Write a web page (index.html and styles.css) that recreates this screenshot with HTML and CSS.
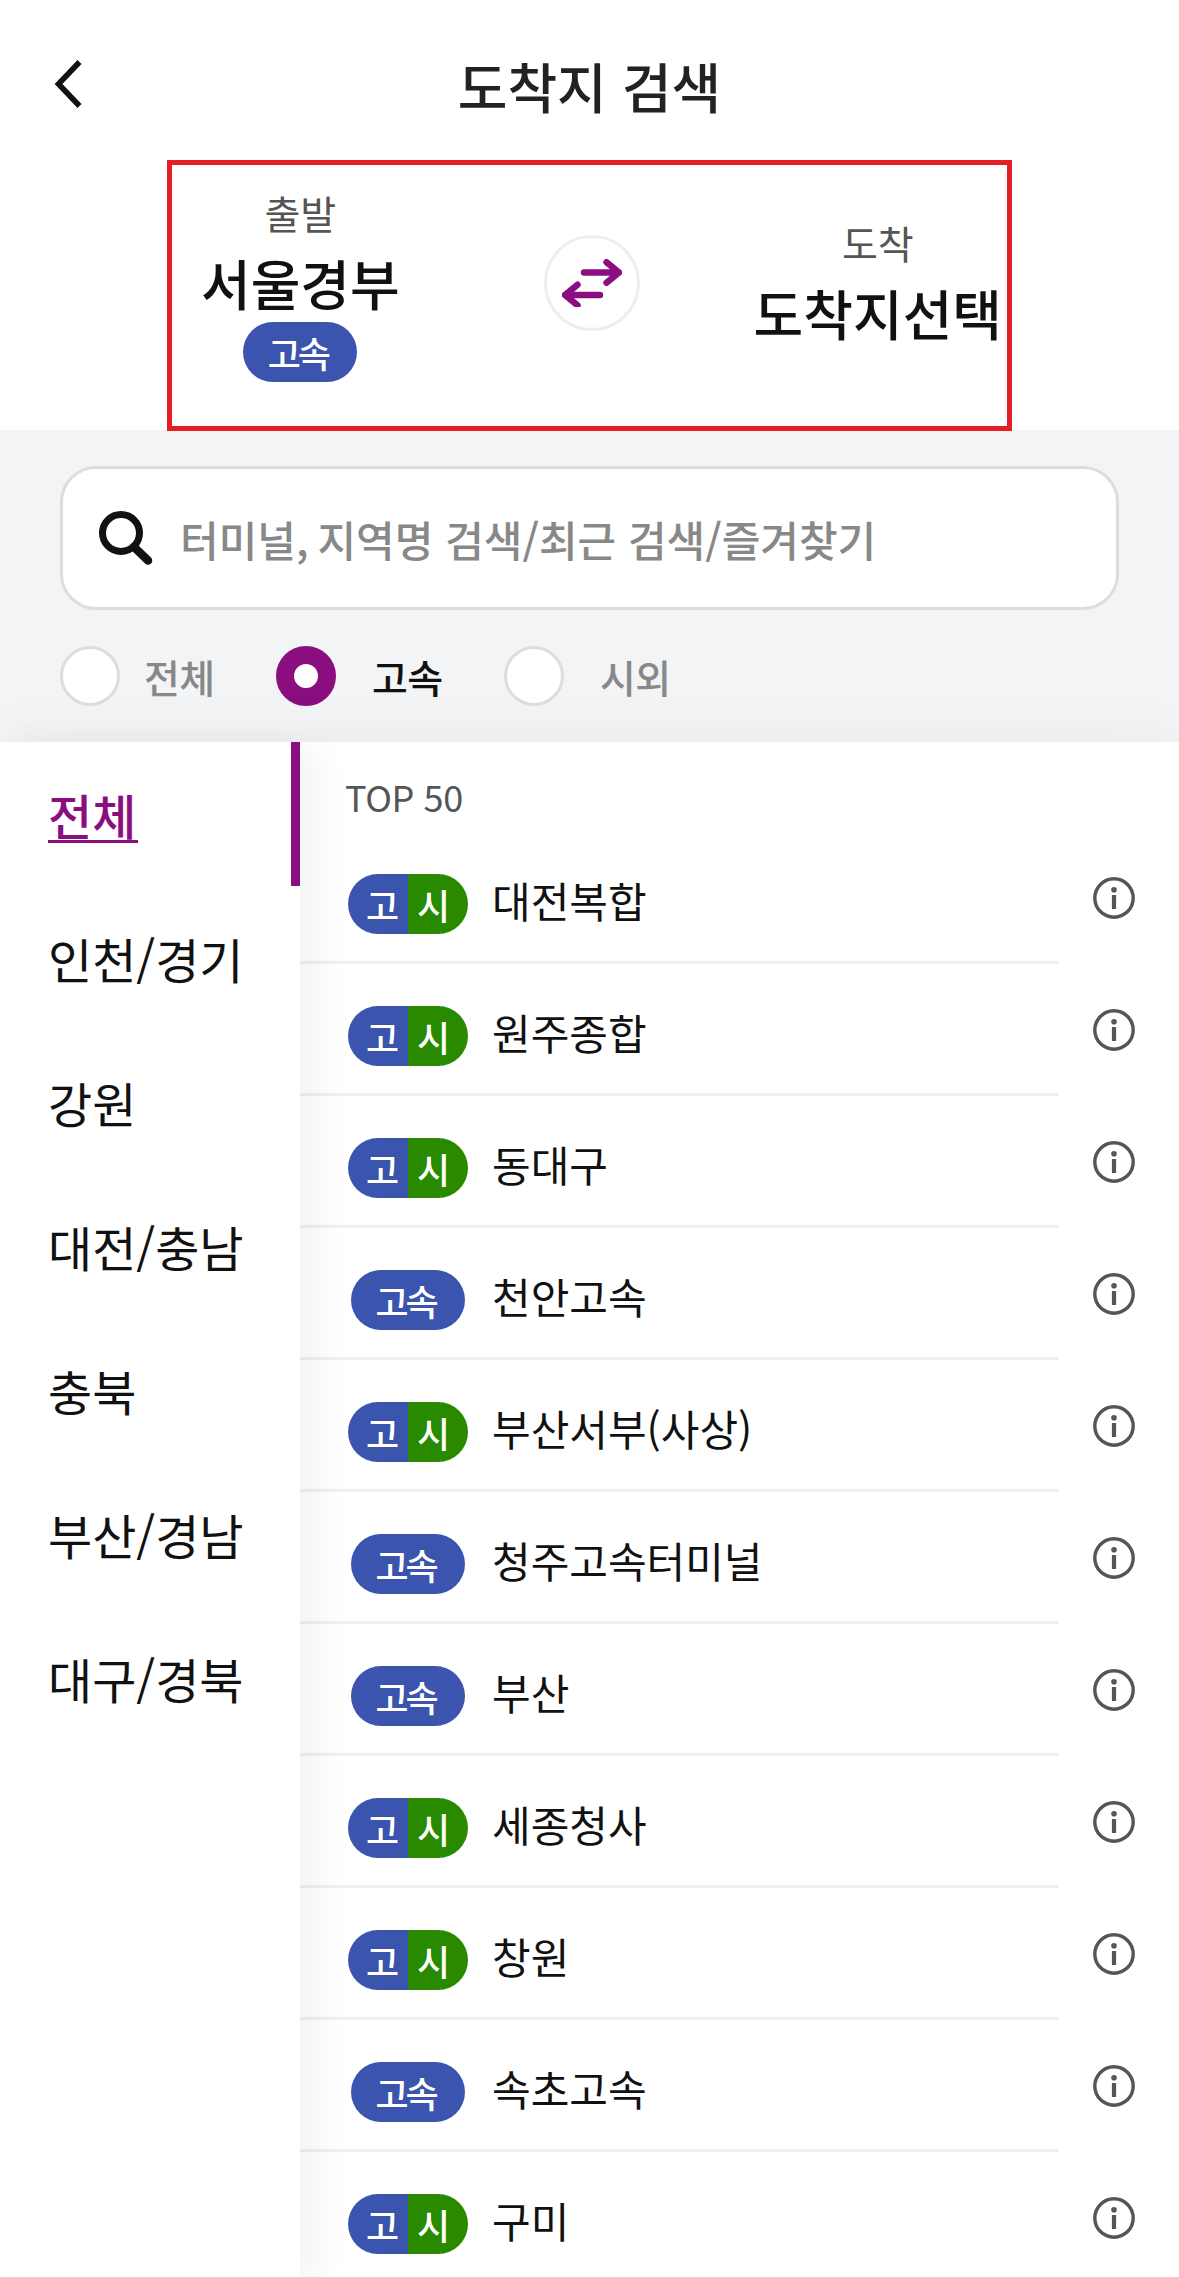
FILE: index.html
```html
<!DOCTYPE html>
<html lang="ko">
<head>
<meta charset="utf-8">
<title>도착지 검색</title>
<link rel="stylesheet" href="styles.css">
</head>
<body>
<svg class="defs" width="0" height="0" aria-hidden="true">
  <symbol id="info" viewBox="0 0 42 42">
    <circle cx="21" cy="21" r="19.2" fill="none" stroke="#555" stroke-width="3.4"/>
    <circle cx="21" cy="12.7" r="2.8" fill="#555"/>
    <path d="M21 18v14" stroke="#555" stroke-width="4.2"/>
  </symbol>
</svg>
<header class="header">
  <button class="back" aria-label="뒤로">
    <svg width="30" height="50" viewBox="0 0 30 50"><path d="M25.5 3 4.5 25l21 22" fill="none" stroke="#111" stroke-width="5.6"/></svg>
  </button>
  <h1 class="title">도착지 검색</h1>
</header>

<section class="route">
  <div class="stop">
    <span class="stop-label">출발</span>
    <strong class="stop-name">서울경부</strong>
    <span class="badge">고속</span>
  </div>
  <button class="swap" aria-label="교체">
    <svg width="60" height="48" viewBox="0 0 60 48"><g fill="none" stroke="#8b0e80" stroke-width="6.4" stroke-linecap="round" stroke-linejoin="round"><path d="M22 13.5h35M44.500 3.200 57 13.500 44.500 23.800"/><path d="M38 36H3M15.500 25.700 3 36l12.500 10.300"/></g></svg>
  </button>
  <div class="stop">
    <span class="stop-label">도착</span>
    <strong class="stop-name">도착지선택</strong>
  </div>
</section>

<section class="filter">
  <div class="search">
    <svg width="58" height="58" viewBox="0 0 58 58"><g fill="none" stroke="#111"><circle cx="24" cy="24" r="18.500" stroke-width="7"/><path d="M37 38 51 51.500" stroke-width="8.500" stroke-linecap="round"/></g></svg>
    <span class="placeholder">터미널<span class="comma">, </span>지역명 검색/최근 검색/즐겨찾기</span>
  </div>
  <div class="radios">
    <label class="radio"><i class="dot"></i><span>전체</span></label>
    <label class="radio on"><i class="dot"></i><span>고속</span></label>
    <label class="radio last"><i class="dot"></i><span>시외</span></label>
  </div>
</section>

<main class="panel">
  <nav class="regions">
    <a class="region active"><span>전체</span></a>
    <a class="region">인천/경기</a>
    <a class="region">강원</a>
    <a class="region">대전/충남</a>
    <a class="region">충북</a>
    <a class="region">부산/경남</a>
    <a class="region">대구/경북</a>
  </nav>
  <div class="list">
    <h2 class="list-title">TOP 50</h2>
    <div class="row"><div class="terminal"><span class="kind"><span class="duo"><b>고</b><b>시</b></span></span><span>대전복합</span></div><svg class="info"><use href="#info"/></svg></div>
    <div class="row"><div class="terminal"><span class="kind"><span class="duo"><b>고</b><b>시</b></span></span><span>원주종합</span></div><svg class="info"><use href="#info"/></svg></div>
    <div class="row"><div class="terminal"><span class="kind"><span class="duo"><b>고</b><b>시</b></span></span><span>동대구</span></div><svg class="info"><use href="#info"/></svg></div>
    <div class="row"><div class="terminal"><span class="kind"><span class="badge">고속</span></span><span>천안고속</span></div><svg class="info"><use href="#info"/></svg></div>
    <div class="row"><div class="terminal"><span class="kind"><span class="duo"><b>고</b><b>시</b></span></span><span>부산서부(사상)</span></div><svg class="info"><use href="#info"/></svg></div>
    <div class="row"><div class="terminal"><span class="kind"><span class="badge">고속</span></span><span>청주고속터미널</span></div><svg class="info"><use href="#info"/></svg></div>
    <div class="row"><div class="terminal"><span class="kind"><span class="badge">고속</span></span><span>부산</span></div><svg class="info"><use href="#info"/></svg></div>
    <div class="row"><div class="terminal"><span class="kind"><span class="duo"><b>고</b><b>시</b></span></span><span>세종청사</span></div><svg class="info"><use href="#info"/></svg></div>
    <div class="row"><div class="terminal"><span class="kind"><span class="duo"><b>고</b><b>시</b></span></span><span>창원</span></div><svg class="info"><use href="#info"/></svg></div>
    <div class="row"><div class="terminal"><span class="kind"><span class="badge">고속</span></span><span>속초고속</span></div><svg class="info"><use href="#info"/></svg></div>
    <div class="row"><div class="terminal"><span class="kind"><span class="duo"><b>고</b><b>시</b></span></span><span>구미</span></div><svg class="info"><use href="#info"/></svg></div>
  </div>
</main>
</body>
</html>
```
FILE: styles.css
```css
* { box-sizing: border-box; }

body {
  margin: 0;
  width: 1179px;
  height: 2277px;
  overflow: hidden;
  display: flex;
  flex-direction: column;
  background: #fff;
  color: #111;
  font-family: "Noto Sans CJK KR", sans-serif;
}

button { padding: 0; border: 0; background: none; }
svg { display: block; }
.defs { display: none; }

/* Header */
.header {
  height: 160px;
  flex: none;
  padding: 8px 54px 0;
  display: grid;
  grid-template-columns: 30px 1fr 30px;
  align-items: center;
}
.back { align-self: start; margin-top: 51px; }
.title {
  margin: 0;
  padding-top: 3px;
  text-align: center;
  font-size: 54px;
  line-height: 78px;
  font-weight: 500;
  color: #222;
}

/* Departure / arrival */
.route {
  flex: none;
  width: 845px;
  height: 271px;
  margin: 0 0 -1px 167px;
  padding: 19px 5px 0 29px;
  border: 5px solid #e31e26;
  display: flex;
  align-items: flex-start;
  position: relative;
  z-index: 1;
}
.stop {
  height: 198px;
  display: flex;
  flex-direction: column;
  align-items: center;
  justify-content: center;
}
.stop-label { height: 60px; font-size: 39px; line-height: 57px; color: #555; }
.stop-name { font-size: 54px; line-height: 78px; font-weight: 500; }
.swap {
  width: 96px;
  height: 96px;
  margin: 51px auto 0 144px;
  border: 3px solid #eee;
  border-radius: 50%;
  display: flex;
  align-items: center;
  justify-content: center;
}

/* Bus type badges */
.badge {
  width: 114px;
  height: 60px;
  padding-right: 5px;
  border-radius: 30px;
  background: #3b55ae;
  color: #fff;
  font-size: 36px;
  line-height: 60px;
  font-weight: 500;
  letter-spacing: -3px;
  text-align: center;
}
.duo {
  width: 120px;
  height: 60px;
  border-radius: 30px;
  overflow: hidden;
  display: flex;
  color: #fff;
  font-size: 36px;
  line-height: 60px;
}
.duo b { width: 60px; font-weight: 500; letter-spacing: -3px; }
.duo b:first-child { background: #3b55ae; padding-left: 18px; }
.duo b:last-child { background: #298a00; padding-left: 9px; }

/* Search and type filter */
.filter {
  flex: none;
  height: 312px;
  padding: 36px 60px 0;
  background: #f3f4f6;
}
.search {
  height: 144px;
  padding: 0 33px 0 34px;
  border: 3px solid #ddd;
  border-radius: 36px;
  background: #fff;
  display: flex;
  align-items: center;
  gap: 25px;
}
.placeholder { font-size: 42px; line-height: 60px; font-weight: 500; color: #888; padding-top: 2px; }
.comma { letter-spacing: -1.4px; }
.radios { display: flex; margin-top: 36px; }
.radio {
  display: flex;
  align-items: center;
  width: 216px;
  height: 60px;
  gap: 24px;
  font-size: 39px;
  font-weight: 500;
  letter-spacing: -0.7px;
  color: #888;
}
.radio.on { width: 228px; gap: 36px; color: #111; }
.radio.last { gap: 36px; }
.dot { width: 60px; height: 60px; border: 3px solid #ddd; border-radius: 50%; background: #fff; }
.on .dot { border: 18px solid #8b0e80; }

/* Region menu and terminal list */
.panel {
  flex: 1;
  min-height: 0;
  display: flex;
  background: #fff;
  box-shadow: 0 0 60px rgba(0, 0, 0, 0.05);
}
.regions {
  flex: none;
  width: 300px;
  background: #fff;
  box-shadow: 15px 6px 36px rgba(0, 0, 0, 0.05);
  position: relative;
  z-index: 1;
}
.region {
  height: 144px;
  padding-left: 48px;
  display: flex;
  align-items: center;
  font-size: 48px;
}
.region.active { border-right: 9px solid #8b0e80; color: #8b0e80; font-weight: 500; }
.active span { min-width: 90px; height: 56px; line-height: 54px; border-bottom: 3px solid #8b0e80; margin-top: 2px; }

.list { flex: 1; }
.list-title {
  margin: 0;
  height: 90px;
  padding: 27px 0 0 45px;
  font-size: 36px;
  line-height: 54px;
  font-weight: 400;
  letter-spacing: -0.4px;
  color: #555;
}
.row { height: 132px; display: flex; }
.terminal {
  width: 759px;
  padding: 5px 0 0 48px;
  border-bottom: 3px solid #f0f0f0;
  display: flex;
  align-items: center;
  gap: 24px;
  font-size: 42px;
}
.kind { width: 120px; padding-top: 10px; display: flex; justify-content: center; }
.info { width: 42px; height: 42px; margin: 45px 0 0 34px; }
```
